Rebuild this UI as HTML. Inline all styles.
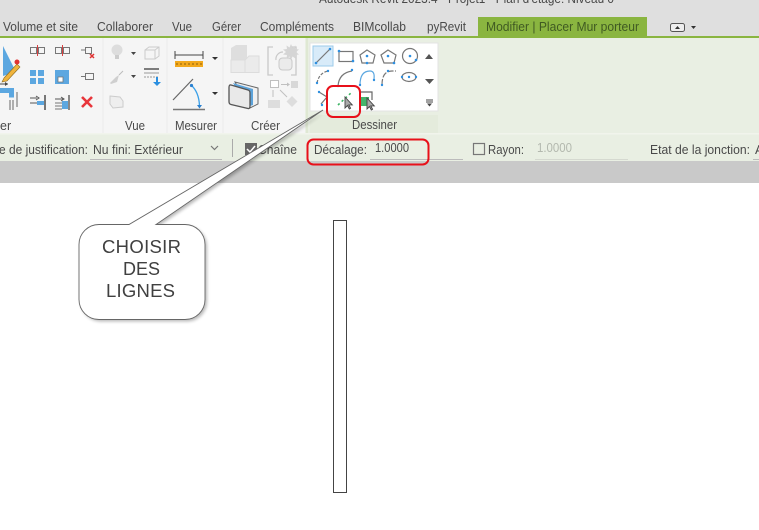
<!DOCTYPE html>
<html><head><meta charset="utf-8"><style>
html,body{margin:0;padding:0;background:#fff;width:759px;height:530px;overflow:hidden}
svg{display:block}
text{font-family:"Liberation Sans",sans-serif;font-size:12.5px;fill:#4a4a4a}
</style></head><body>
<svg width="759" height="530" viewBox="0 0 759 530" xmlns="http://www.w3.org/2000/svg">
<defs>
<filter id="b" x="-5%" y="-5%" width="110%" height="110%"><feGaussianBlur stdDeviation="0.35"/></filter>
<filter id="s" x="-20%" y="-20%" width="140%" height="140%"><feGaussianBlur stdDeviation="1.600"/></filter>
</defs>
<rect width="759" height="530" fill="#fff"/>
<g filter="url(#b)">
<rect width="759" height="36" fill="#dfdfdf"/>
<text x="319" y="3" textLength="295" lengthAdjust="spacingAndGlyphs">Autodesk Revit 2023.4 - Projet1 - Plan d'étage: Niveau 0</text>
<text x="3" y="31" textLength="75" lengthAdjust="spacingAndGlyphs">Volume et site</text>
<text x="97" y="31" textLength="56" lengthAdjust="spacingAndGlyphs">Collaborer</text>
<text x="172" y="31" textLength="20" lengthAdjust="spacingAndGlyphs">Vue</text>
<text x="212" y="31" textLength="29" lengthAdjust="spacingAndGlyphs">Gérer</text>
<text x="260" y="31" textLength="74" lengthAdjust="spacingAndGlyphs">Compléments</text>
<text x="353" y="31" textLength="53" lengthAdjust="spacingAndGlyphs">BIMcollab</text>
<text x="427" y="31" textLength="39" lengthAdjust="spacingAndGlyphs">pyRevit</text>
<rect x="478" y="17" width="169" height="20" fill="#8ab53f"/>
<text x="486" y="31" textLength="153" lengthAdjust="spacingAndGlyphs" style="fill:#3f5a24">Modifier | Placer Mur porteur</text>
<rect x="670.5" y="23.5" width="14" height="8" rx="2" fill="#eee" stroke="#555"/>
<path d="M675 29h5l-2.500-3z" fill="#333"/>
<path d="M691 26h5l-2.500 3z" fill="#333"/>
<rect y="36" width="759" height="2" fill="#8ab53f"/>
<rect y="38" width="759" height="96" fill="#e9efe3"/>
<rect y="38" width="305" height="96" fill="#f5f5f5"/>
<path d="M103 38v96M167 38v96M223 38v96" stroke="#ececec"/>
<rect x="306" y="38" width="2" height="96" fill="#dfe8d3"/>
<rect x="310" y="43" width="128" height="68" fill="#fff" stroke="#e3e3e3"/>
<rect x="310" y="115" width="128" height="18" fill="#e4ebdc"/>
<rect y="134" width="759" height="27" fill="#e9efe3"/>
<rect y="133" width="759" height="1.500" fill="#f1f4ec"/>
<rect y="161" width="759" height="22" fill="#c9c9c9"/>

<!-- left panel icons -->
<path d="M3 46v30l13-4z" fill="#5ba7e0"/>
<path d="M4 78l13-14 3 3-13 14-5 1z" fill="#f0b43c" stroke="#8a6a20" stroke-width=".6"/>
<circle cx="17" cy="62" r="2.500" fill="#e03030"/>
<path d="M0 84h8" stroke="#444"/><path d="M5 82l3 2-3 2z" fill="#444"/>
<path d="M0 90.500h11.500v7" fill="none" stroke="#5ba7e0" stroke-width="5"/>
<path d="M10 100v10M13 100v10M17 107v-15" stroke="#666"/>
<g fill="none" stroke="#777">
<rect x="30.500" y="47.500" width="6" height="6"/><rect x="38.500" y="47.500" width="6" height="6"/>
<rect x="55.500" y="47.500" width="6" height="6"/><rect x="63.500" y="47.500" width="6" height="6"/>
<path d="M37.500 45v11M62.500 45v11" stroke="#d84040"/>
<path d="M81 50h4M85.500 47.500h6v6h-6z"/><path d="M81 76.500h4M85.500 73.500h8v6h-8z"/>
</g>
<path d="M90 54l4 4M94 54l-4 4" stroke="#e03030" stroke-width="1.500"/>
<g fill="#5ba7e0"><rect x="30" y="70" width="6" height="6"/><rect x="38" y="70" width="6" height="6"/><rect x="30" y="78" width="6" height="6"/><rect x="38" y="78" width="6" height="6"/>
<path d="M55 70h14v14H55zM58 77v5h5v-5z" fill-rule="evenodd"/></g>
<path d="M58 77h5v5h-5z" fill="#fff" stroke="#777" stroke-width=".8"/>
<g>
<path d="M30 98h7M36 96l3 2-3 2M30 103h7" stroke="#555" fill="none"/><rect x="37" y="101" width="7" height="4" fill="#5ba7e0"/><rect x="44" y="95" width="2" height="15" fill="#777"/>
<path d="M55 99h8M61 97l3 2-3 2" stroke="#555" fill="none"/><path d="M55 103h7M55 106h7M55 109h7" stroke="#777"/><rect x="62" y="101" width="6" height="8" fill="#5ba7e0"/><rect x="68" y="95" width="2" height="15" fill="#888"/>
</g>
<path d="M82 97l10 10M92 97l-10 10" stroke="#e8353a" stroke-width="2.600"/>
<text x="0" y="130">er</text>

<!-- Vue -->
<circle cx="117" cy="50" r="5.500" fill="#ddd"/><rect x="115" y="55" width="4" height="4" fill="#ccc"/>
<path d="M131 52h5l-2.500 3z" fill="#444"/><path d="M131 75h5l-2.500 3z" fill="#444"/>
<path d="M145 50l4-3h10v9l-4 3h-10zM145 50h10v9M155 50l4-3" fill="none" stroke="#ccc"/>
<path d="M110 83l6-6 3-2-2 7-6 2z" fill="#cfcfcf"/><path d="M119 75l4-4" stroke="#bbb"/>
<path d="M144 69h15" stroke="#555" stroke-width="1.500"/><path d="M144 73h15" stroke="#999"/><path d="M144 77h15" stroke="#999" stroke-dasharray="2 1"/>
<path d="M157 77v6" stroke="#2a8fe0" stroke-width="2"/><path d="M153 82h8l-4 4z" fill="#2a8fe0"/>
<path d="M110 96l10 1 3 4v6l-10 1-3-4z" fill="#eee" stroke="#ccc"/>
<text x="125" y="130" textLength="20" lengthAdjust="spacingAndGlyphs">Vue</text>

<!-- Mesurer -->
<path d="M175 55h28M175 51v8M203 51v8" stroke="#444" fill="none"/>
<rect x="175" y="61" width="28" height="6" fill="#f2a81e"/>
<path d="M177 63v2M181 63v2M185 63v2M189 63v2M193 63v2M197 63v2M201 63v2" stroke="#8a6010"/>
<path d="M212 57h6l-3 3z" fill="#333"/><path d="M212 92h6l-3 3z" fill="#333"/>
<path d="M173 100l20-21" stroke="#666" stroke-width="1.200"/>
<path d="M173 109.500h32" stroke="#777" stroke-width="1.600"/>
<path d="M191 85q8 7 8.500 21" fill="none" stroke="#3aa0e8" stroke-width="1.300"/>
<circle cx="191.500" cy="85.500" r="1.600" fill="#2a80d0"/><path d="M197 105h5l-2.500 3.500z" fill="#2a80d0"/>
<text x="175" y="130" textLength="42" lengthAdjust="spacingAndGlyphs">Mesurer</text>

<!-- Créer -->
<path d="M231 48l5-3h11v15h-16z" fill="#dedede"/>
<rect x="231" y="60" width="14" height="12.500" fill="#ebebeb" stroke="#dcdcdc"/>
<path d="M245 60l4-4h10v16.500h-14z" fill="#ebebeb" stroke="#dcdcdc"/>
<path d="M273 47h-5v28h5M291 47h5v28h-5" fill="none" stroke="#c9c9c9" stroke-width="1.300"/>
<path d="M283 52a7 7 0 0 0-7 8" fill="none" stroke="#c9c9c9" stroke-width="1.200"/>
<rect x="279" y="58" width="13" height="12" rx="3.500" fill="#ebebeb" stroke="#c9c9c9"/>
<path d="M291 44l1.500 3.500 3-2-.5 3.500 4 .5-3 2.500 3 2.500-4 .5.5 3.500-3-2-1.500 3.500-1.500-3.500-3 2 .5-3.500-4-.5 3-2.500-3-2.500 4-.5-.5-3.500 3 2z" fill="#d5d5d5"/>
<path d="M235 82l23 6v16l-8 4z" fill="#f0f0f0" stroke="#666"/>
<path d="M233 83l20 6v16l-6 2z" fill="#5da3da"/>
<path d="M231 85l17 5q2 .5 2 3v13q0 3-2 2.500l-17-4q-2-.5-2-3v-14q0-3 2-2.500z" fill="#e9e9e9" stroke="#555" stroke-width="1.300"/>
<rect x="270.500" y="80.500" width="8" height="7" fill="#fff" stroke="#c0c0c0"/><rect x="291" y="81" width="7" height="7" fill="#d8d8d8"/>
<path d="M281 84.500h8M273 90v7M280 90l7 7" stroke="#c0c0c0"/>
<path d="M287 82.500l3 2-3 2z" fill="#c0c0c0"/>
<rect x="268" y="100" width="12" height="8" fill="#ddd"/><path d="M292 96l5.500 5.500-5.500 5.500-5.500-5.500z" fill="#ddd"/>
<text x="251" y="130" textLength="29" lengthAdjust="spacingAndGlyphs">Créer</text>

<!-- Dessiner gallery -->
<rect x="313" y="46" width="20" height="20" fill="#d8ebf9" stroke="#9ccbea"/>
<g fill="none" stroke="#777" stroke-width="1.200">
<path d="M316 63l14-14"/>
<rect x="339" y="51.500" width="14" height="10"/>
<path d="M367 50l8 5-2 8h-11l-2-8z"/>
<path d="M388 50l8 5-2 8h-10l-3-8z"/>
<circle cx="410" cy="56" r="7.500"/>
<path d="M317 83q2-10 11-12" stroke-dasharray="3 1.500"/>
<path d="M338 86q1-13 14-15"/>
<path d="M360 85q0-14 10-14 5 0 4 8" stroke="#5ba7e0"/>
<path d="M382 85q0-14 10-14h4" stroke-dasharray="6 1.500"/>
<ellipse cx="409" cy="77" rx="7" ry="4.500"/>
<path d="M319 92l8 5-6 7"/>
</g>
<g fill="#2d8fe0">
<circle cx="316" cy="63" r="1.300"/><circle cx="330" cy="49" r="1.300"/>
<circle cx="339" cy="51" r="1.300"/><circle cx="353" cy="61" r="1.300"/>
<circle cx="367" cy="56" r="1.300"/><circle cx="367" cy="63" r="1.300"/>
<circle cx="388" cy="56" r="1.300"/><circle cx="394" cy="63" r="1.300"/>
<circle cx="410" cy="56" r="1.300"/><circle cx="416" cy="60" r="1.300"/>
<circle cx="317" cy="83" r="1.200"/><circle cx="328" cy="71" r="1.200"/>
<circle cx="338" cy="86" r="1.200"/><circle cx="352" cy="70" r="1.200"/>
<circle cx="360" cy="85" r="1.200"/><circle cx="374" cy="80" r="1.200"/>
<circle cx="382" cy="85" r="1.200"/><circle cx="388" cy="71" r="1.200"/>
<circle cx="409" cy="77" r="1.200"/><circle cx="402" cy="77" r="1.200"/><circle cx="416" cy="77" r="1.200"/>
<circle cx="319" cy="92" r="1.200"/><circle cx="322" cy="105" r="1.200"/>
</g>
<path d="M338 105l14-13" stroke="#3cb464" stroke-width="1.600" stroke-dasharray="2.200 2.800"/>
<path d="M345 97v11l2.500-2.500 1.800 3.500 1.300-.8-1.800-3.300h3.500z" fill="#aaa" stroke="#444" stroke-width=".9"/>
<rect x="359" y="97" width="10" height="9" fill="#44b56c"/>
<path d="M360 92h12v8" fill="none" stroke="#666" stroke-width="1.200"/>
<path d="M367 98v11l2.500-2.500 1.800 3.500 1.300-.8-1.800-3.300h3.500z" fill="#aaa" stroke="#444" stroke-width=".9"/>
<path d="M425 59h8l-4-5z" fill="#555"/><path d="M425 79h9l-4.500 5z" fill="#555"/>
<path d="M426 100h7M426 102h7" stroke="#444"/><path d="M427 103.500h5l-2.500 3z" fill="#444"/>
<text x="352" y="129" textLength="45" lengthAdjust="spacingAndGlyphs">Dessiner</text>

<!-- options -->
<text x="-1" y="154" textLength="89" lengthAdjust="spacingAndGlyphs">e de justification:</text>
<text x="93" y="154" textLength="90" lengthAdjust="spacingAndGlyphs">Nu fini: Extérieur</text>
<path d="M211 146l3.500 3.500 3.500-3.500" fill="none" stroke="#777" stroke-width="1.200"/>
<path d="M90 159.500h132" stroke="#bbb"/>
<path d="M232.500 139v18" stroke="#aaa"/>
<rect x="245" y="143" width="12" height="12" fill="#666"/>
<path d="M247 149l3 3 5-6" fill="none" stroke="#fff" stroke-width="1.500"/>
<text x="258" y="154" textLength="39" lengthAdjust="spacingAndGlyphs">Chaîne</text>
<text x="314" y="154" textLength="53" lengthAdjust="spacingAndGlyphs">Décalage:</text>
<text x="375" y="152" textLength="34" lengthAdjust="spacingAndGlyphs">1.0000</text>
<path d="M370 159.500h93" stroke="#bbb"/>
<rect x="473.500" y="143.500" width="11" height="11" fill="none" stroke="#777" stroke-width="1.200"/>
<text x="488" y="154" textLength="36" lengthAdjust="spacingAndGlyphs">Rayon:</text>
<text x="537" y="152" textLength="35" lengthAdjust="spacingAndGlyphs" style="fill:#b3b8ae">1.0000</text>
<path d="M535 159.500h93" stroke="#d5d9d0"/>
<text x="650" y="154" textLength="100" lengthAdjust="spacingAndGlyphs">Etat de la jonction:</text>
<text x="755" y="154">A</text>
<path d="M753 159.500h6" stroke="#bbb"/>
</g>

<rect x="333.500" y="220.500" width="13" height="272" fill="#fff" stroke="#444"/>

<!-- callout -->
<path d="M99 224.500H129L323 110 156 224.500H185a20 20 0 0 1 20 20v55a20 20 0 0 1-20 20H99a20 20 0 0 1-20-20v-55a20 20 0 0 1 20-20z" fill="#000" opacity=".28" filter="url(#s)" transform="translate(2 2)"/>
<rect x="327" y="86" width="33" height="31" rx="6" fill="none" stroke="#e8101a" stroke-width="2"/>
<rect x="307.500" y="139.500" width="121" height="25" rx="6" fill="none" stroke="#e8101a" stroke-width="2"/>
<path d="M99 224.500H129L323 110 156 224.500H185a20 20 0 0 1 20 20v55a20 20 0 0 1-20 20H99a20 20 0 0 1-20-20v-55a20 20 0 0 1 20-20z" fill="#fff" stroke="#666" stroke-width=".9"/>
<text x="102" y="253" textLength="79" style="font-size:18.500px;fill:#404040">CHOISIR</text>
<text x="123" y="275" textLength="37" style="font-size:18px;fill:#404040">DES</text>
<text x="106" y="297" textLength="69" style="font-size:18.500px;fill:#404040">LIGNES</text>
</svg>
</body></html>
